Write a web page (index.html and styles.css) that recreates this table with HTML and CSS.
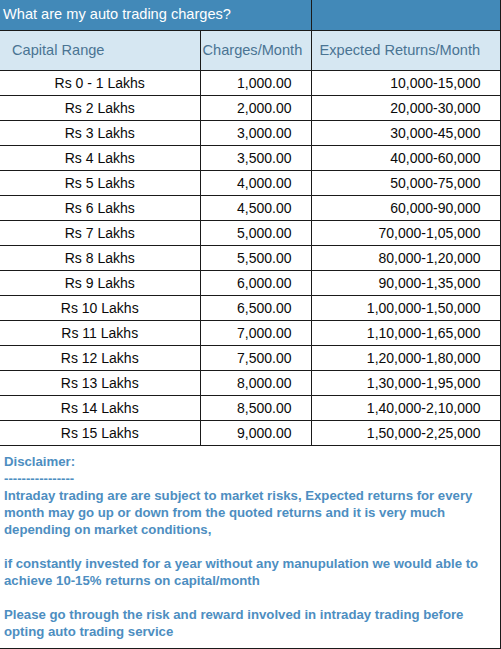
FILE: index.html
```html
<!DOCTYPE html>
<html>
<head>
<meta charset="utf-8">
<link rel="stylesheet" href="styles.css">
</head>
<body>
<table class="charges">
  <colgroup>
    <col class="c1">
    <col class="c2">
    <col class="c3">
  </colgroup>
  <tr class="title-row">
    <td colspan="2" class="title">What are my auto trading charges?</td>
    <td class="title"></td>
  </tr>
  <tr class="head-row">
    <th class="h1">Capital Range</th>
    <th class="h2">Charges/Month</th>
    <th class="h3">Expected Returns/Month</th>
  </tr>
  <tr class="data-row"><td class="cap">Rs 0 - 1 Lakhs</td><td class="num">1,000.00</td><td class="ret">10,000-15,000</td></tr>
  <tr class="data-row"><td class="cap">Rs 2 Lakhs</td><td class="num">2,000.00</td><td class="ret">20,000-30,000</td></tr>
  <tr class="data-row"><td class="cap">Rs 3 Lakhs</td><td class="num">3,000.00</td><td class="ret">30,000-45,000</td></tr>
  <tr class="data-row"><td class="cap">Rs 4 Lakhs</td><td class="num">3,500.00</td><td class="ret">40,000-60,000</td></tr>
  <tr class="data-row"><td class="cap">Rs 5 Lakhs</td><td class="num">4,000.00</td><td class="ret">50,000-75,000</td></tr>
  <tr class="data-row"><td class="cap">Rs 6 Lakhs</td><td class="num">4,500.00</td><td class="ret">60,000-90,000</td></tr>
  <tr class="data-row"><td class="cap">Rs 7 Lakhs</td><td class="num">5,000.00</td><td class="ret">70,000-1,05,000</td></tr>
  <tr class="data-row"><td class="cap">Rs 8 Lakhs</td><td class="num">5,500.00</td><td class="ret">80,000-1,20,000</td></tr>
  <tr class="data-row"><td class="cap">Rs 9 Lakhs</td><td class="num">6,000.00</td><td class="ret">90,000-1,35,000</td></tr>
  <tr class="data-row"><td class="cap">Rs 10 Lakhs</td><td class="num">6,500.00</td><td class="ret">1,00,000-1,50,000</td></tr>
  <tr class="data-row"><td class="cap">Rs 11 Lakhs</td><td class="num">7,000.00</td><td class="ret">1,10,000-1,65,000</td></tr>
  <tr class="data-row"><td class="cap">Rs 12 Lakhs</td><td class="num">7,500.00</td><td class="ret">1,20,000-1,80,000</td></tr>
  <tr class="data-row"><td class="cap">Rs 13 Lakhs</td><td class="num">8,000.00</td><td class="ret">1,30,000-1,95,000</td></tr>
  <tr class="data-row"><td class="cap">Rs 14 Lakhs</td><td class="num">8,500.00</td><td class="ret">1,40,000-2,10,000</td></tr>
  <tr class="data-row"><td class="cap">Rs 15 Lakhs</td><td class="num">9,000.00</td><td class="ret">1,50,000-2,25,000</td></tr>
  <tr class="disc-row">
    <td colspan="3" class="disclaimer">
      Disclaimer:<br>
      ----------------<br>
      Intraday trading are are subject to market risks, Expected returns for every month may go up or down from the quoted returns and it is very much depending on market conditions,<br>
      <br>
      if constantly invested for a year without any manupulation we would able to achieve 10-15% returns on capital/month<br>
      <br>
      Please go through the risk and reward involved in intraday trading before opting auto trading service
    </td>
  </tr>
</table>
</body>
</html>
```
FILE: styles.css
```css
html, body {
  margin: 0;
  padding: 0;
  background: #ffffff;
}

.charges {
  width: 500px;
  border-collapse: collapse;
  table-layout: fixed;
  font-family: "Liberation Sans", Arial, sans-serif;
  font-size: 14px;
  color: #0a0a0a;
}

.c1 { width: 200px; }
.c2 { width: 111px; }
.c3 { width: 189px; }

.charges td,
.charges th {
  border: 1px solid #1a1a1a;
  padding: 0;
}

.charges tr td:first-child,
.charges tr th:first-child {
  border-left: none;
}

.charges tr.title-row td {
  border-top: none;
}

.charges tr.title-row {
  height: 30px;
}

.charges td.title {
  background: #4289b8;
  color: #ffffff;
  font-size: 14.6px;
  font-weight: normal;
  padding: 0 0 2px 3px;
  vertical-align: middle;
}

.charges tr.head-row {
  height: 40px;
}

.charges tr.head-row th {
  background: #d6e7f2;
  color: #4a7493;
  font-weight: normal;
  font-size: 14.6px;
  text-align: left;
  vertical-align: middle;
}

.charges th.h1 { padding-left: 12px; }
.charges th.h2 { padding-left: 2px; }
.charges th.h3 { padding-left: 8px; }

.charges tr.data-row { height: 25px; }

.charges td.cap {
  text-align: center;
}

.charges td.num {
  text-align: right;
  padding-right: 19px;
}

.charges td.ret {
  text-align: right;
  padding-right: 19px;
}

.charges tr.disc-row {
  height: 201px;
}

.charges td.disclaimer {
  color: #4d8ec1;
  font-weight: bold;
  font-size: 13.2px;
  line-height: 17px;
  padding: 7px 10px 8px 4px;
  vertical-align: top;
}
```
